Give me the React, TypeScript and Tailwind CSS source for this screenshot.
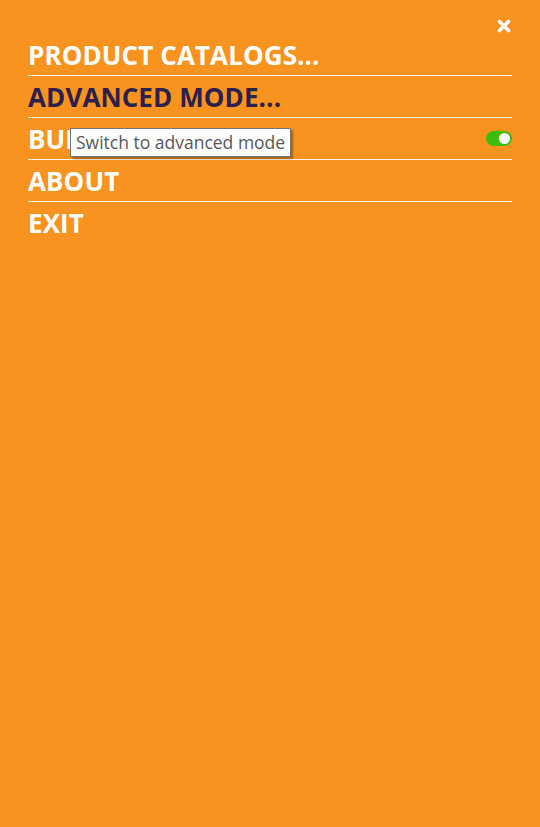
import { useState } from "react";

const items = [
  { label: "PRODUCT CATALOGS...", dark: false },
  { label: "ADVANCED MODE...", dark: true },
  { label: "BUILD", dark: false, toggle: true },
  { label: "ABOUT", dark: false },
  { label: "EXIT", dark: false, last: true },
];

export default function App() {
  const [on, setOn] = useState(true);

  return (
    <div
      className="w-[540px] h-[827px] bg-[#f8931f] px-[28px]"
      style={{ fontFamily: '"Open Sans", sans-serif' }}
    >
      {/* Close */}
      <div className="h-[34px] flex justify-end pt-[19px]">
        <svg width="14" height="14" viewBox="0 0 14 14" className="mr-[1px]">
          <path
            d="M2.5 2.5 L11.5 11.5 M11.5 2.5 L2.5 11.5"
            stroke="white"
            strokeWidth="3.6"
            strokeLinecap="round"
          />
        </svg>
      </div>

      {/* Menu */}
      <ul>
        {items.map((item) => (
          <li
            key={item.label}
            className={`relative h-[42px] flex items-center justify-between ${
              item.last ? "" : "border-b border-white/90"
            }`}
          >
            <span
              className={`text-[26px] font-bold leading-none tracking-[0.1px] ${
                item.dark ? "text-[#2d1f4e]" : "text-white"
              }`}
            >
              {item.label}
            </span>
            {item.toggle && (
              <>
                <button
                  onClick={() => setOn(!on)}
                  className={`w-[26px] h-[15px] rounded-full flex items-center px-[2px] ${
                    on ? "bg-[#3cbc0e] justify-end" : "bg-gray-300 justify-start"
                  }`}
                >
                  <span className="w-[11px] h-[11px] rounded-full bg-white" />
                </button>
                <div
                  className="absolute left-[42px] top-[10px] bg-white border border-[#767676] px-[5px] py-[2px] text-[17.5px] leading-[23px] text-[#575757] shadow-[2px_2px_2px_rgba(0,0,0,0.35)] whitespace-nowrap"
                  style={{ fontWeight: 400 }}
                >
                  Switch to advanced mode
                </div>
              </>
            )}
          </li>
        ))}
      </ul>
    </div>
  );
}
